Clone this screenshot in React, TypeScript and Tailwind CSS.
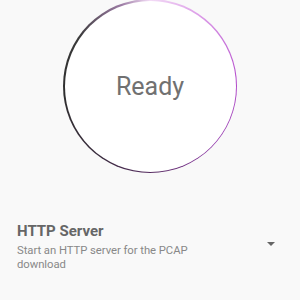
export default function App() {
  return (
    <div className="w-[300px] h-[300px] bg-[#f9f9f9] overflow-hidden flex flex-col items-center" style={{ fontFamily: "Roboto, 'Liberation Sans', sans-serif" }}>
      <div
        className="mt-[-1px] w-[174px] h-[174px] rounded-full p-[1.5px] shrink-0"
        style={{ background: "conic-gradient(from 0deg, #f3dcf6 0deg, #dc9ce8 35deg, #b44ccc 85deg, #9438ae 130deg, #5a2c66 175deg, #3a2c3e 215deg, #2e2e2e 265deg, #3a3a3a 305deg, #9a7aa2 340deg, #f3dcf6 360deg)" }}
      >
        <div className="w-full h-full rounded-full bg-white flex items-center justify-center">
          <span className="text-[25px] text-[#717171] mt-[2px]">Ready</span>
        </div>
      </div>
      <div className="w-full flex items-center mt-[48px] pl-[17px] pr-[25px]">
        <div className="flex-1 flex flex-col">
          <div className="text-[15px] font-bold text-[#666] leading-[20px]">HTTP Server</div>
          <div className="text-[11.3px] text-[#888] leading-[14px] w-[195px] mt-[3px] tracking-[-0.05px]">Start an HTTP server for the PCAP download</div>
        </div>
        <div className="w-0 h-0 border-l-[4px] border-r-[4px] border-t-[4px] border-l-transparent border-r-transparent border-t-[#666] mt-[-6px]" />
      </div>
    </div>
  );
}
